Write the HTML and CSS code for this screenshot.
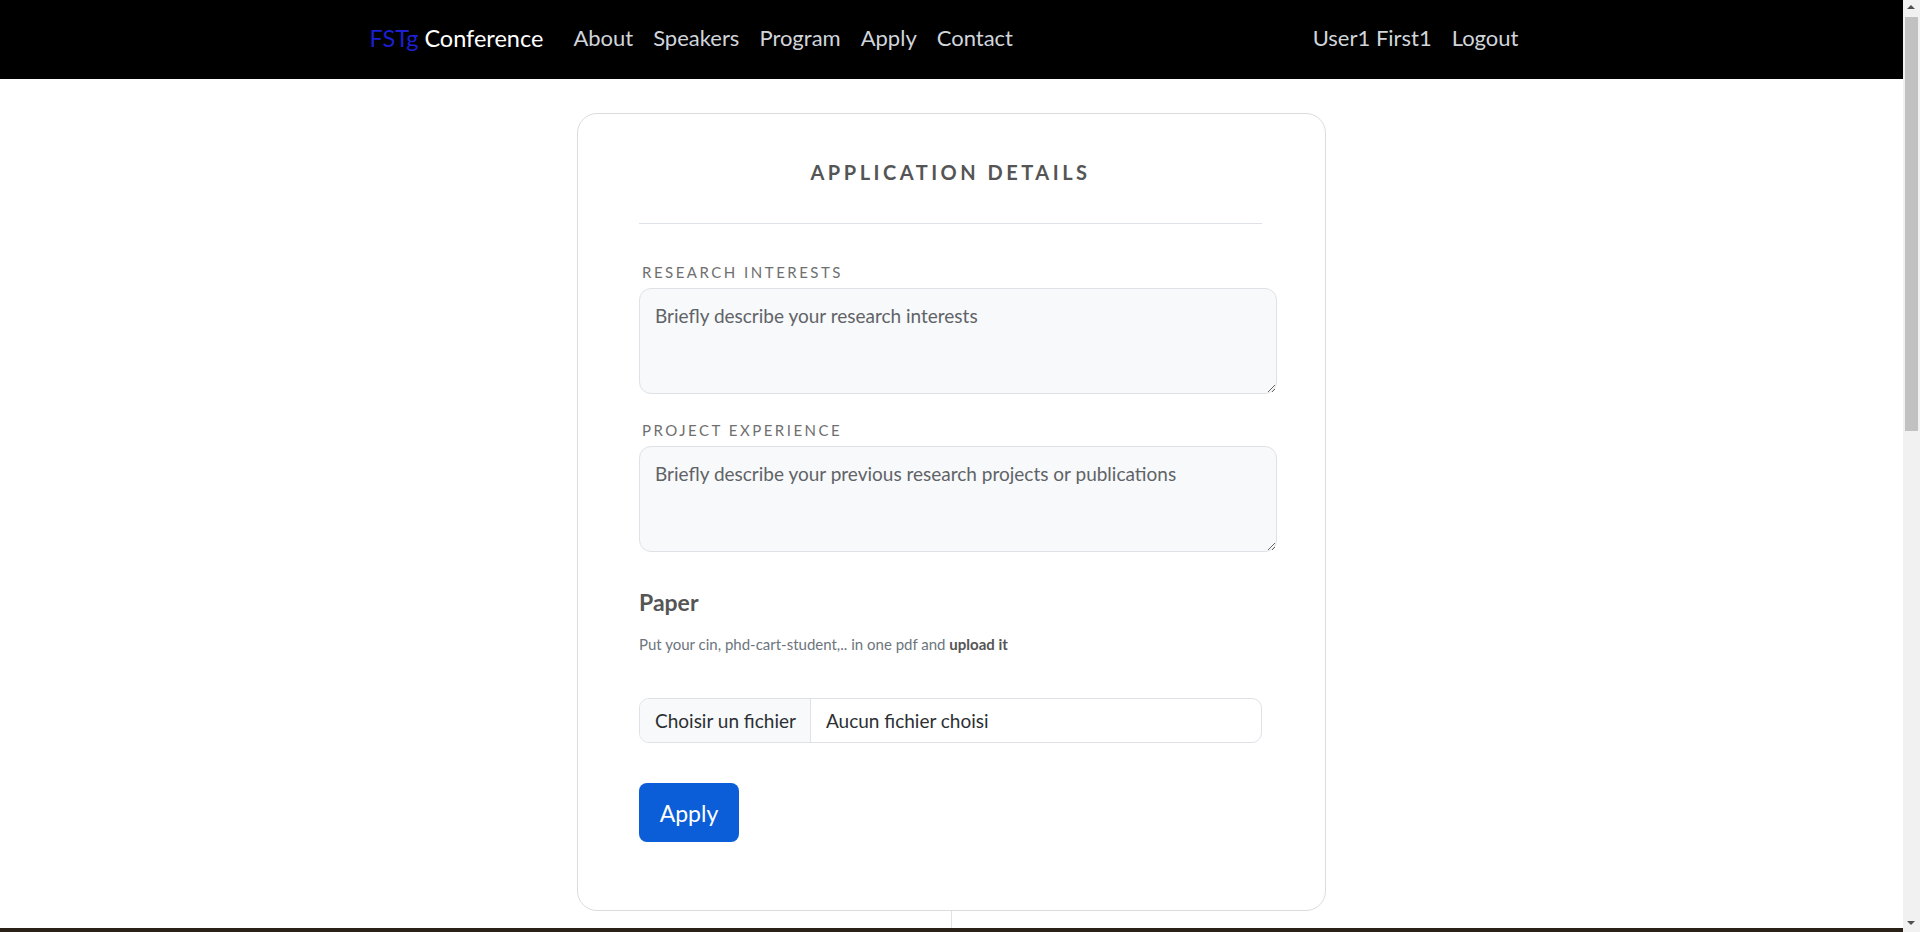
FILE: index.html
```html
<!DOCTYPE html>
<html lang="en">
<head>
<meta charset="utf-8">
<title>FSTg Conference - Apply</title>
<link rel="stylesheet" href="styles.css">
</head>
<body>
<div class="site">
  <nav class="navbar">
    <div class="nav-inner">
      <a class="brand" href="#"><span class="brand-accent">FSTg</span> Conference</a>
      <ul class="nav-links">
        <li><a href="#">About</a></li>
        <li><a href="#">Speakers</a></li>
        <li><a href="#">Program</a></li>
        <li><a href="#">Apply</a></li>
        <li><a href="#">Contact</a></li>
      </ul>
      <ul class="nav-links nav-user">
        <li><a href="#">User1 First1</a></li>
        <li><a href="#">Logout</a></li>
      </ul>
    </div>
  </nav>

  <main class="page">
    <form class="card">
      <h2 class="card-title">APPLICATION DETAILS</h2>
      <hr class="divider">
      <label class="field-label" for="ri">RESEARCH INTERESTS</label>
      <textarea id="ri" class="field-area" placeholder="Briefly describe your research interests"></textarea>
      <label class="field-label field-label-2" for="pe">PROJECT EXPERIENCE</label>
      <textarea id="pe" class="field-area" placeholder="Briefly describe your previous research projects or publications"></textarea>
      <h3 class="paper-title">Paper</h3>
      <p class="help">Put your cin, phd-cart-student,.. in one pdf and <strong>upload it</strong></p>
      <div class="file-input">
        <span class="file-btn">Choisir un fichier</span>
        <span class="file-name">Aucun fichier choisi</span>
      </div>
      <button type="button" class="btn-apply">Apply</button>
    </form>
    <div class="stem"></div>
  </main>

  <footer class="footer"></footer>
</div>

<div class="scrollbar" aria-hidden="true">
  <span class="sb-arrow sb-up"></span>
  <span class="sb-thumb"></span>
  <span class="sb-arrow sb-down"></span>
</div>
</body>
</html>
```

FILE: styles.css
```css
* { box-sizing: border-box; }

html, body {
  margin: 0;
  padding: 0;
}

body {
  font-family: "Lato", "Noto Sans", sans-serif;
  background: #ffffff;
  color: #555555;
}

a { text-decoration: none; }

.site {
  margin-right: 17px;
}

/* ---------- navbar ---------- */
.navbar {
  background: #000000;
  height: 79px;
  display: flex;
  align-items: center;
  padding-bottom: 4px;
}

.nav-inner {
  width: 100%;
  max-width: 1164px;
  margin: 0 auto;
  padding-right: 15px;
  display: flex;
  align-items: center;
}

.brand {
  font-size: 23.5px;
  color: #ffffff;
  margin-right: 20px;
}

.brand-accent { color: #1c1fd2; }

.nav-links {
  list-style: none;
  margin: 0;
  padding: 0;
  display: flex;
}

.nav-links a {
  display: block;
  padding: 6px 10px;
  font-size: 22px;
  color: #d0d5db;
}

.nav-user {
  margin-left: auto;
}

.nav-user li:last-child a { padding-right: 0; }

/* ---------- card ---------- */
.page {
  display: flex;
  flex-direction: column;
  align-items: center;
}

.card {
  width: 749px;
  margin-top: 34px;
  border: 1px solid #dcdcdc;
  border-radius: 20px;
  padding: 46px 63px 68px 61px;
  display: flex;
  flex-direction: column;
  align-items: flex-start;
}

.card-title {
  align-self: stretch;
  margin: 0;
  text-align: center;
  font-size: 20px;
  line-height: 24px;
  font-weight: 700;
  letter-spacing: 3.5px;
  color: #555555;
}

.divider {
  align-self: stretch;
  margin: 39px 0 0;
  border: 0;
  border-top: 1px solid #dee2e6;
  height: 0;
}

.field-label {
  display: block;
  margin: 38px 0 0 3px;
  font-size: 15px;
  line-height: 20px;
  letter-spacing: 2.5px;
  color: #6f6f6f;
}

.field-label-2 { margin-top: 26px; }

.field-area {
  display: block;
  width: calc(100% + 15px);
  height: 106px;
  margin-top: 6px;
  padding: 13px 15px;
  border: 1px solid #dee2e6;
  border-radius: 12px;
  background: #f8f9fa;
  font-family: "Lato", "Noto Sans", sans-serif;
  font-size: 19px;
  line-height: 28px;
  color: #555555;
  resize: vertical;
}

.field-area::placeholder { color: #5f6368; }

.paper-title {
  margin: 36px 0 0;
  font-size: 23px;
  line-height: 28px;
  font-weight: 700;
  color: #555555;
}

.help {
  margin: 18px 0 0;
  font-size: 15px;
  line-height: 20px;
  color: #6c757d;
}

.help strong { color: #555555; }

.file-input {
  align-self: stretch;
  margin-top: 44px;
  height: 45px;
  display: flex;
  border: 1px solid #dee2e6;
  border-radius: 10px;
  overflow: hidden;
  font-size: 19px;
  color: #2b2f33;
}

.file-btn {
  display: flex;
  align-items: center;
  padding: 0 14px 0 15px;
  background: #f8f9fa;
  border-right: 1px solid #dee2e6;
}

.file-name {
  display: flex;
  align-items: center;
  padding: 0 15px;
}

.btn-apply {
  margin-top: 40px;
  width: 100px;
  height: 59px;
  border: 0;
  border-radius: 8px;
  background: #0b5ed7;
  color: #ffffff;
  font-family: "Lato", "Noto Sans", sans-serif;
  font-size: 23px;
}

.stem {
  width: 1px;
  height: 17px;
  background: #e2e2e2;
}

.footer {
  background: #2a2119;
  height: 900px;
}

/* ---------- fake browser scrollbar ---------- */
.scrollbar {
  position: fixed;
  top: 0;
  right: 0;
  width: 17px;
  height: 100vh;
  background: #f1f1f1;
}

.sb-thumb {
  position: absolute;
  left: 2px;
  right: 2px;
  top: 17px;
  height: 414px;
  background: #c1c1c1;
}

.sb-arrow {
  position: absolute;
  left: 4px;
  width: 0;
  height: 0;
  border-left: 4.5px solid transparent;
  border-right: 4.5px solid transparent;
}

.sb-up {
  top: 5px;
  border-bottom: 4px solid #505050;
}

.sb-down {
  bottom: 7px;
  border-top: 4px solid #505050;
}
```
